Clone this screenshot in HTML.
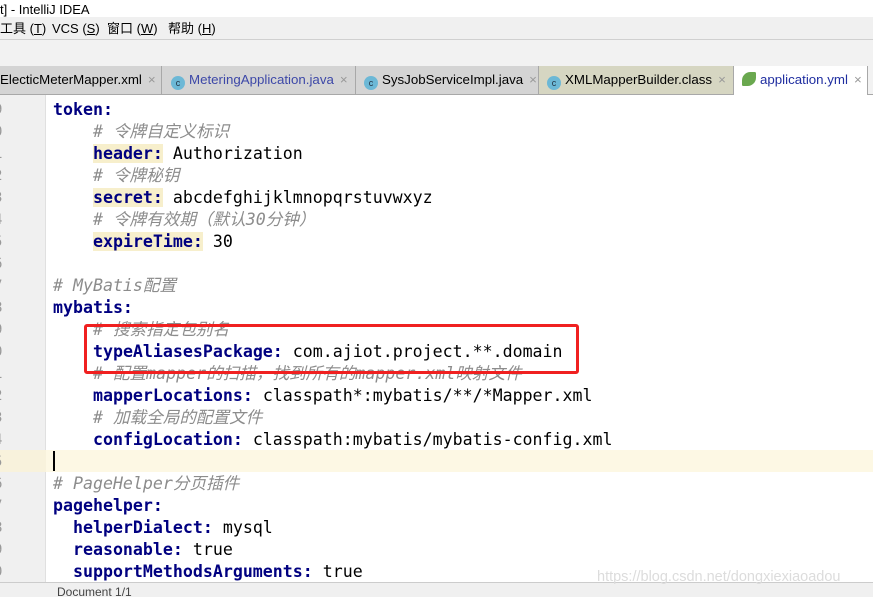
<!DOCTYPE html>
<html><head><meta charset="utf-8"><style>
*{margin:0;padding:0;box-sizing:border-box}
body{width:873px;height:597px;overflow:hidden;background:#fff;position:relative;font-family:"Liberation Sans","Noto Sans CJK SC",sans-serif}
.abs{position:absolute}
.ui{font-size:13px;color:#000;white-space:nowrap}
.tab{position:absolute;top:66px;height:28px;background:#d4d4d4;border-right:1px solid #a8a8a8;font-size:13.3px;line-height:27px;white-space:nowrap;color:#000}
.x{color:#999;margin-left:6px}
.ic{display:inline-block;width:14px;height:14px;border-radius:50%;background:#6cb8d6;vertical-align:-2px;margin-right:4px;font-size:9px;line-height:14px;text-align:center;color:#234}
.code{position:absolute;left:53px;font-family:"DejaVu Sans Mono","Liberation Mono","Noto Sans CJK SC",monospace;font-size:16.6px;white-space:pre;line-height:22px;height:22px}
.k{color:#000080;font-weight:bold}
.kb{color:#000080;font-weight:bold;background:#f7efcc}
.c{color:#8c8c8c;font-style:italic;font-family:"DejaVu Sans Mono","Noto Sans CJK SC",monospace}
.ln{position:absolute;left:-6px;width:12px;font-family:"DejaVu Sans Mono",monospace;font-size:14px;color:#999;line-height:22px}
</style></head><body>
<div class="abs ui" style="left:0;top:1px;height:17px;line-height:17px;font-size:13px">t] - IntelliJ IDEA</div>
<div class="abs" style="left:0;top:17px;width:873px;height:23px;background:#f0f0f0;border-bottom:1px solid #d0d0d0"></div>
<div class="abs ui" style="left:0;top:19px;line-height:20px">工具 (<u>T</u>)</div>
<div class="abs ui" style="left:52px;top:19px;line-height:20px">VCS (<u>S</u>)</div>
<div class="abs ui" style="left:107px;top:19px;line-height:20px">窗口 (<u>W</u>)</div>
<div class="abs ui" style="left:168px;top:19px;line-height:20px">帮助 (<u>H</u>)</div>
<div class="abs" style="left:0;top:40px;width:873px;height:26px;background:#f2f2f2"></div>
<div class="abs" style="left:0;top:66px;width:873px;height:29px;background:#f2f2f2;border-bottom:1px solid #a8a8a8"></div>
<div class="tab" style="left:0;width:162px;padding-left:0">ElecticMeterMapper.xml<span class="x">×</span></div>
<div class="tab" style="left:162px;width:194px;padding-left:9px;color:#3d48a8"><span class="ic">c</span>MeteringApplication.java<span class="x">×</span></div>
<div class="tab" style="left:356px;width:183px;padding-left:8px"><span class="ic">c</span>SysJobServiceImpl.java<span class="x">×</span></div>
<div class="tab" style="left:539px;width:195px;padding-left:8px;background:#d6d6c2"><span class="ic">c</span>XMLMapperBuilder.class<span class="x">×</span></div>
<div class="tab" style="left:734px;width:134px;padding-left:8px;background:#fff;color:#1f2ea0;height:29px"><span class="ic" style="background:#6aa84f;border-radius:60% 10%"></span>application.yml<span class="x">×</span></div>
<div class="abs" style="left:0;top:95px;width:46px;height:487px;background:#f0f0f0;border-right:1px solid #e0e0e0"></div>
<div class="abs" style="left:46px;top:450px;width:827px;height:22px;background:#fdf8e4"></div>
<div class="abs" style="left:0;top:450px;width:46px;height:22px;background:#f8f2dc"></div>
<div class="abs" style="left:53px;top:451px;width:2px;height:20px;background:#000"></div>
<div class="ln" style="top:99px">9<br>0<br>1<br>2<br>3<br>4<br>5<br>6<br>7<br>8<br>9<br>0<br>1<br>2<br>3<br>4<br>5<br>6<br>7<br>8<br>9<br>0</div>
<div class="code" style="top:99px"><span class="k">token:</span></div>
<div class="code" style="top:121px">    <span class="c"># 令牌自定义标识</span></div>
<div class="code" style="top:143px">    <span class="kb">header:</span> Authorization</div>
<div class="code" style="top:165px">    <span class="c"># 令牌秘钥</span></div>
<div class="code" style="top:187px">    <span class="kb">secret:</span> abcdefghijklmnopqrstuvwxyz</div>
<div class="code" style="top:209px">    <span class="c"># 令牌有效期（默认30分钟）</span></div>
<div class="code" style="top:231px">    <span class="kb">expireTime:</span> 30</div>
<div class="code" style="top:275px"><span class="c"># MyBatis配置</span></div>
<div class="code" style="top:297px"><span class="k">mybatis:</span></div>
<div class="code" style="top:319px">    <span class="c"># 搜索指定包别名</span></div>
<div class="code" style="top:341px">    <span class="k">typeAliasesPackage:</span> com.ajiot.project.**.domain</div>
<div class="code" style="top:363px">    <span class="c"># 配置mapper的扫描，找到所有的mapper.xml映射文件</span></div>
<div class="code" style="top:385px">    <span class="k">mapperLocations:</span> classpath*:mybatis/**/*Mapper.xml</div>
<div class="code" style="top:407px">    <span class="c"># 加载全局的配置文件</span></div>
<div class="code" style="top:429px">    <span class="k">configLocation:</span> classpath:mybatis/mybatis-config.xml</div>
<div class="code" style="top:473px"><span class="c"># PageHelper分页插件</span></div>
<div class="code" style="top:495px"><span class="k">pagehelper:</span></div>
<div class="code" style="top:517px">  <span class="k">helperDialect:</span> mysql</div>
<div class="code" style="top:539px">  <span class="k">reasonable:</span> true</div>
<div class="code" style="top:561px">  <span class="k">supportMethodsArguments:</span> true</div>
<div class="abs" style="left:84px;top:324px;width:495px;height:50px;border:3px solid #f02020;border-radius:3px"></div>
<div class="abs" style="left:0;top:582px;width:873px;height:15px;background:#f0f0f0;border-top:1px solid #ccc"></div>
<div class="abs ui" style="left:57px;top:585px;font-size:12px;color:#444">Document 1/1</div>
<div class="abs ui" style="left:597px;top:569px;font-size:14.5px;color:#dcdcdc">https://blog.csdn.net/dongxiexiaoadou</div>
</body></html>
